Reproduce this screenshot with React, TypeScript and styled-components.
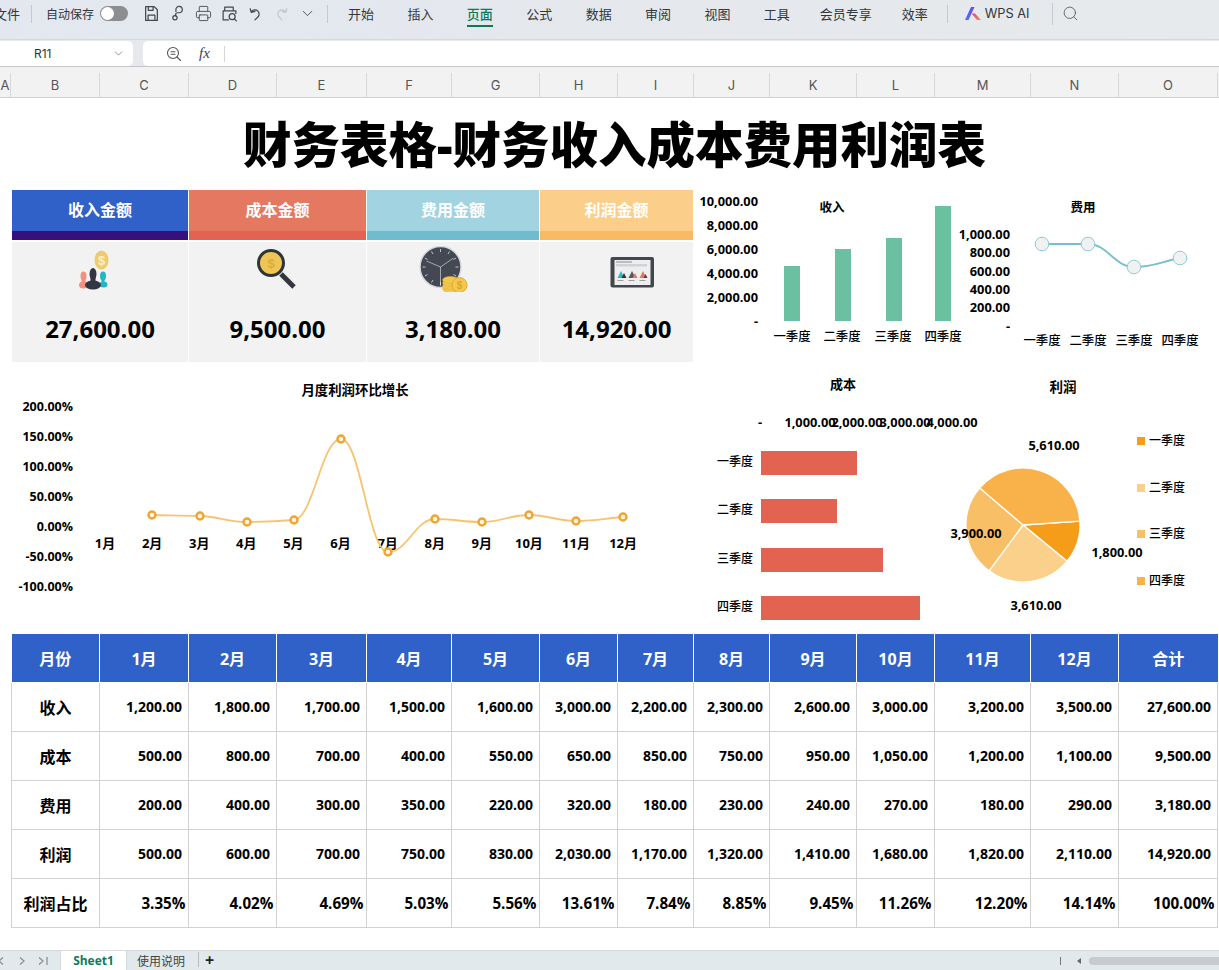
import React from "react";
import styled, { createGlobalStyle } from "styled-components";
import { ChevronDown, Printer, Search } from "lucide-react";

const FONT = `"Open Sans", "Noto Sans CJK SC", sans-serif`;
const UI = `Inter, "Noto Sans CJK SC", sans-serif`;

const Global = createGlobalStyle`
  html, body { margin: 0; padding: 0; background: #fff; }
  body { font-family: ${FONT}; }
  * { box-sizing: border-box; }
`;

const Page = styled.div`
  width: 1219px; height: 970px; overflow: hidden; display: flex; flex-direction: column; background: #fff;
`;

/* ---------- toolbar ---------- */
const Toolbar = styled.div`
  height: 40px; flex: none; display: flex; align-items: center; padding-bottom: 12px;
  background: linear-gradient(90deg, #e3e7ef, #e6eaec); border-bottom: 1px solid #d4d7db;
  font-family: ${UI}; font-size: 13px; color: #33363a; white-space: nowrap;
`;
const FileLabel = styled.span` margin-left: -6px; width: 26px; flex: none; `;
const Sep = styled.span<{ $left: number; $h?: number }>`
  width: 1px; height: ${(p) => p.$h ?? 18}px; background: #c6cad0; flex: none; margin-left: ${(p) => p.$left}px;
`;
const AutoSave = styled.span` margin-left: 14px; font-size: 12px; width: 48px; flex: none; `;
const Toggle = styled.span`
  margin-left: 6px; width: 28px; height: 15px; border-radius: 8px; background: #8b8d91; flex: none; display: flex; align-items: center; padding-left: 1px;
`;
const Knob = styled.span` width: 13px; height: 13px; border-radius: 50%; background: #fff; `;
const IconGroup = styled.div` display: flex; gap: 9px; margin-left: 15px; color: #44474c; `;
const Nav = styled.div` display: flex; gap: 33.4px; margin-left: 20px; `;
const NavItem = styled.span<{ $active?: boolean; $tight?: boolean }>`
  position: relative; color: ${(p) => (p.$active ? "#0b7a57" : "#33363a")}; font-weight: ${(p) => (p.$active ? 500 : 400)};
  margin-left: ${(p) => (p.$tight ? -3.5 : 0)}px;
  ${(p) => p.$active && `&::after { content: ""; position: absolute; left: 0; right: 0; bottom: -4px; height: 2px; background: #0b7a57; }`}
`;
const Logo = styled.svg` margin-left: 17px; flex: none; `;
const AiText = styled.span` margin-left: 4px; font-size: 12.8px; `;
const SearchWrap = styled.span` margin-left: 9px; display: flex; color: #555; `;

/* ---------- formula bar ---------- */
const FormulaRow = styled.div`
  height: 27px; flex: none; display: flex; gap: 10px; background: #e5e9ed; border-bottom: 1px solid #c4c6c9; padding-top: 1px;
`;
const NameBox = styled.div`
  width: 133px; height: 25px; background: #fff; border-radius: 0 5px 5px 0; display: flex; align-items: center;
  padding: 0 8px 0 34px; justify-content: space-between; font: 12px ${UI}; color: #333;
`;
const FormulaBox = styled.div`
  flex: 1; height: 25px; background: #fff; border-radius: 5px 0 0 5px; display: flex; align-items: center; padding-left: 23px;
`;
const Fx = styled.span`
  margin-left: 17px; width: 18px; font: italic 15px "Liberation Serif", serif; color: #444;
`;
const FxSep = styled.span` margin-left: 7px; width: 1px; height: 16px; background: #d4d6d9; `;

/* ---------- column headers ---------- */
const ColHead = styled.div`
  height: 31px; flex: none; display: flex; align-items: flex-end; background: #f2f2f2; border-bottom: 1px solid #d2d2d2; color: #555; font: 13px ${UI};
`;
const ColLetter = styled.div<{ $w: number }>`
  width: ${(p) => p.$w}px; height: 24px; flex: none; border-right: 1px solid #d8d8d8; display: flex; align-items: center; justify-content: center;
`;

/* ---------- sheet ---------- */
const Sheet = styled.div` flex: 1; display: flex; flex-direction: column; min-height: 0; `;
const Title = styled.h1`
  margin: 0; height: 92px; flex: none; display: flex; align-items: center; justify-content: center; padding: 0 0 4px 10px;
  font: 900 48.5px ${FONT}; color: #000;
`;
const TopRow = styled.div` display: flex; height: 172px; flex: none; `;
const KpiGrid = styled.div`
  margin-left: 12px; width: 681px; flex: none; display: grid; grid-template-columns: 177px 178px 173px 153px; 
`;
const Kpi = styled.div` display: flex; flex-direction: column; border-right: 1px solid #fff; &:last-child { border-right: 0; } `;
const KpiHead = styled.div<{ $bg: string; $band: string }>`
  height: 50px; flex: none; background: ${(p) => p.$bg}; border-bottom: 9px solid ${(p) => p.$band}; padding-bottom: 3px;
  color: #fff; font: 700 16px ${FONT}; display: flex; align-items: center; justify-content: center;
`;
const KpiBody = styled.div`
  margin-top: 2px; height: 120px; background: #f2f2f2; display: flex; flex-direction: column; align-items: center; padding-top: 4px;
`;
const KpiIcon = styled.svg<{ $shift: number }>` flex: none; transform: translateX(${(p) => p.$shift}px); `;
const KpiValue = styled.div` margin-top: 21px; font: 700 24px/32px ${FONT}; color: #000; `;

const Chart = styled.svg<{ $free?: boolean }>`
  display: block; flex: none; overflow: ${(p) => (p.$free ? "visible" : "hidden")};
`;
const ChartText = styled.text<{ $size?: number; $weight?: number }>`
  font-family: ${FONT}; font-size: ${(p) => p.$size ?? 12.8}px; font-weight: ${(p) => p.$weight ?? 700}; fill: #000;
`;
const MidRow = styled.div` display: flex; height: 259px; flex: none; margin-top: 13px; `;

/* ---------- table ---------- */
const Table = styled.table`
  margin-left: 11px; width: 1206px; flex: none; table-layout: fixed; border-collapse: collapse; font-family: ${FONT};
`;
const Th = styled.th`
  height: 48px; background: #3061c8; color: #fff; font-size: 16px; font-weight: 700; border: 1px solid #fff; border-top: 0; padding: 0;
  &:first-child { border-left: 0; } &:last-child { border-right: 0; }
`;
const RowHead = styled.td`
  height: 49px; border: 1px solid #d2d2d2; text-align: center; font-size: 16px; font-weight: 700; color: #000; padding: 0;
`;
const Cell = styled.td<{ $pct?: boolean }>`
  height: 49px; border: 1px solid #d2d2d2; text-align: right; color: #000; font-weight: 700;
  font-size: ${(p) => (p.$pct ? 15.2 : 14)}px; padding: 0 ${(p) => (p.$pct ? 2.5 : 6)}px 0 0; white-space: nowrap;
`;

/* ---------- tabs ---------- */
const TabBar = styled.div`
  margin-top: 22px; height: 21px; flex: none; display: flex; align-items: flex-end; background: #e2e9ec; border-top: 1px solid #d6dadc;
  font: 12px ${FONT}; color: #444;
`;
const Arrows = styled.div` width: 60px; flex: none; height: 100%; display: flex; align-items: center; color: #8b8f92; `;
const ActiveTab = styled.div`
  width: 67px; height: 100%; flex: none; background: #fff; border: 1px solid #d6dadc; border-top: 0; border-bottom: 0;
  display: flex; align-items: center; justify-content: center; color: #0f7a5a; font-weight: 700; font-size: 12px;
`;
const Tab = styled.div` margin-left: 10px; width: 50px; height: 100%; flex: none; display: flex; align-items: center; color: #444; `;
const TabSep = styled.span` margin: 0 0 2px 11px; width: 1px; height: 15px; background: #b8bcbf; flex: none; align-self: center; `;
const Plus = styled.span` margin-left: 6px; font: 700 16px/17px ${FONT}; color: #222; width: 12px; flex: none; align-self: center; `;
const ScrollArea = styled.div` margin-left: auto; height: 100%; display: flex; align-items: center; gap: 8px; `;
const Tick = styled.span` width: 1px; height: 8px; background: #777; margin-right: 8px; `;
const LeftTri = styled.span` width: 0; height: 0; border: 3px solid transparent; border-right: 4px solid #666; border-left: 0; `;
const Thumb = styled.span` width: 130px; height: 8px; border-radius: 4px 0 0 4px; background: #c7cbcd; `;

/* ---------- data ---------- */
const colWidths = [88, 89, 88, 90, 85, 88, 78, 76, 76, 87, 78, 96, 88, 99];
const letters = [["A", 11], ["B", 89], ["C", 89], ["D", 88], ["E", 90], ["F", 85], ["G", 88], ["H", 78], ["I", 76], ["J", 76], ["K", 87], ["L", 78], ["M", 96], ["N", 88], ["O", 99]] as [string, number][];
const months = ["1月", "2月", "3月", "4月", "5月", "6月", "7月", "8月", "9月", "10月", "11月", "12月"];
const rows: [string, string[]][] = [
  ["收入", ["1,200.00", "1,800.00", "1,700.00", "1,500.00", "1,600.00", "3,000.00", "2,200.00", "2,300.00", "2,600.00", "3,000.00", "3,200.00", "3,500.00", "27,600.00"]],
  ["成本", ["500.00", "800.00", "700.00", "400.00", "550.00", "650.00", "850.00", "750.00", "950.00", "1,050.00", "1,200.00", "1,100.00", "9,500.00"]],
  ["费用", ["200.00", "400.00", "300.00", "350.00", "220.00", "320.00", "180.00", "230.00", "240.00", "270.00", "180.00", "290.00", "3,180.00"]],
  ["利润", ["500.00", "600.00", "700.00", "750.00", "830.00", "2,030.00", "1,170.00", "1,320.00", "1,410.00", "1,680.00", "1,820.00", "2,110.00", "14,920.00"]],
  ["利润占比", ["3.35%", "4.02%", "4.69%", "5.03%", "5.56%", "13.61%", "7.84%", "8.85%", "9.45%", "11.26%", "12.20%", "14.14%", "100.00%"]],
];
const quarters = ["一季度", "二季度", "三季度", "四季度"];

/* monotone smooth path through points: flat tangent at each local peak, so no overshoot */
function smooth(pts: [number, number][]) {
  const slope = (i: number) => (pts[i + 1][1] - pts[i][1]) / (pts[i + 1][0] - pts[i][0]);
  const tan = pts.map((_, i) => {
    if (i === 0) return slope(0);
    if (i === pts.length - 1) return slope(i - 1);
    const a = slope(i - 1), b = slope(i);
    return a * b <= 0 ? 0 : (2 * a * b) / (a + b);
  });
  let d = `M${pts[0][0]} ${pts[0][1]}`;
  for (let i = 0; i < pts.length - 1; i++) {
    const [x1, y1] = pts[i], [x2, y2] = pts[i + 1];
    const h = (x2 - x1) / 2.4;
    d += `C${x1 + h} ${y1 + tan[i] * h} ${x2 - h} ${y2 - tan[i + 1] * h} ${x2} ${y2}`;
  }
  return d;
}

/* ---------- toolbar icons ---------- */
const Ic = ({ children, color = "currentColor" }: { children: React.ReactNode; color?: string }) => (
  <svg width="17" height="17" viewBox="0 0 16 16" fill="none" stroke={color} strokeWidth="1.150" strokeLinecap="round" strokeLinejoin="round">{children}</svg>
);

const ToolbarIcons = () => (
  <IconGroup>
    <Ic><path d="M2.500 1.500h8l3 3v10h-11zM5 1.500v3.500h4.500v-3.500M4.800 14.500V9.500h6.400v5" /></Ic>
    <Ic><path d="M6.500 6V4.300a3 3 0 1 1 3 3H8A1.800 1.800 0 0 0 6.200 9.100V10" /><circle cx="5.600" cy="12" r="2" /></Ic>
    <Printer size={17} strokeWidth={1.25} />
    <Ic><path d="M3.500 5V2h8v3M7 14H2V5.500h12V8" /><circle cx="10.500" cy="11" r="2.800" /><path d="M12.500 13l2 2" /></Ic>
    <Ic><path d="M3 3.500 4 7l3.500-1M4 6.500A4 4 0 1 1 9.500 12L7.500 14" /></Ic>
    <Ic color="#c3c7cb"><path d="M13 3.500 12 7 8.500 6M12 6.500A4 4 0 1 0 6.500 12L8.500 14" /></Ic>
    <ChevronDown size={17} strokeWidth={1.25} />
  </IconGroup>
);

/* ---------- KPI pictures ---------- */
const Dollar = ({ x, y, size, fill }: { x: number; y: number; size: number; fill: string }) => (
  <text x={x} y={y} fontSize={size} fontFamily="Liberation Sans" fontWeight="700" textAnchor="middle" fill={fill}>$</text>
);
const MoneyIcon = () => (
  <KpiIcon $shift={-5.5} width="50" height="46" viewBox="70 246 50 46">
    <ellipse cx="102" cy="260" rx="7" ry="9.500" fill="#eecb6f" />
    <Dollar x={102} y={265} size={13} fill="#fbf0cf" />
    <ellipse cx="84" cy="276" rx="3" ry="4.500" fill="#f58f80" /><ellipse cx="84" cy="285" rx="4.500" ry="3.500" fill="#f58f80" />
    <rect x="82" y="278" width="4" height="6" fill="#f58f80" />
    <ellipse cx="103.500" cy="276" rx="3" ry="4.500" fill="#22b7c6" /><ellipse cx="104" cy="284.500" rx="4" ry="3" fill="#22b7c6" />
    <rect x="102" y="278" width="3" height="6" fill="#22b7c6" />
    <ellipse cx="93.500" cy="274" rx="3.500" ry="6" fill="#333642" /><ellipse cx="93.500" cy="285" rx="8" ry="4.500" fill="#333642" />
    <rect x="91" y="277" width="5" height="7" fill="#333642" />
  </KpiIcon>
);
const LensIcon = () => (
  <KpiIcon $shift={-2} width="50" height="46" viewBox="251 246 50 46">
    <line x1="281" y1="274" x2="294" y2="287" stroke="#33363c" strokeWidth="5" />
    <circle cx="271" cy="263" r="12.500" fill="#eec655" stroke="#2f333a" strokeWidth="3" />
    <Dollar x={271} y={268} size={13} fill="#d9ad3c" />
  </KpiIcon>
);
const ClockIcon = () => {
  const ticks = Array.from({ length: 12 }, (_, i) => (i * Math.PI) / 6);
  return (
    <KpiIcon $shift={-8.5} width="50" height="46" viewBox="420 246 50 46">
      <circle cx="441" cy="267" r="20.500" fill="#444853" stroke="#d5d8dd" strokeWidth="1.500" />
      {ticks.map((a, i) => (
        <line key={i} x1={441 + 18 * Math.sin(a)} y1={267 - 18 * Math.cos(a)} x2={441 + 15 * Math.sin(a)} y2={267 - 15 * Math.cos(a)} stroke="#dfe1e5" strokeWidth=".8" />
      ))}
      <path d="M441 267 427 261M441 267 454 258M441 267v19" stroke="#e8e9ec" strokeWidth=".6" fill="none" />
      {[289, 286, 283, 280].map((y) => <ellipse key={y} cx="451" cy={y} rx="8" ry="3.500" fill="#f3c64c" stroke="#e0ac2e" strokeWidth=".5" />)}
      <circle cx="460" cy="285" r="7.500" fill="#f4c84f" stroke="#e0ac2e" strokeWidth="1" />
      <Dollar x={460} y={289} size={10} fill="#dca730" />
    </KpiIcon>
  );
};
const TabletIcon = () => (
  <KpiIcon $shift={15.5} width="50" height="46" viewBox="607 246 50 46">
    <rect x="610" y="257" width="43.500" height="30.500" rx="2" fill="#42464e" />
    <rect x="614" y="260" width="36" height="25" fill="#eeeeee" />
    <rect x="615.500" y="261" width="16" height="2" fill="#b8bcc2" /><rect x="615.500" y="264" width="31" height="2.500" fill="#cfd2d6" />
    <path d="M617 278l3.500-7 3.500 7z" fill="#30b6c8" /><path d="M621 278l2.500-5 2.500 5z" fill="#333" />
    <path d="M628 278l3.500-7 3.500 7z" fill="#555a63" /><path d="M632 278l2.500-5 2.500 5z" fill="#e07a6c" />
    <path d="M639 278l3.500-7 3.500 7z" fill="#e8755f" /><path d="M643 278l2-4 2 4z" fill="#444" />
    <rect x="617" y="280" width="6" height="1" fill="#9a9da2" /><rect x="628" y="280" width="6" height="1" fill="#9a9da2" /><rect x="639" y="280" width="6" height="1" fill="#9a9da2" />
  </KpiIcon>
);

const kpis = [
  { label: "收入金额", bg: "#3061c8", band: "#36107f", value: "27,600.00", Icon: MoneyIcon },
  { label: "成本金额", bg: "#e57861", band: "#e26352", value: "9,500.00", Icon: LensIcon },
  { label: "费用金额", bg: "#a1d4e0", band: "#6fbccf", value: "3,180.00", Icon: ClockIcon },
  { label: "利润金额", bg: "#fbcf89", band: "#f8bb62", value: "14,920.00", Icon: TabletIcon },
];

/* ---------- charts ---------- */
const RevenueChart = () => {
  const bars = [[784, 266], [835, 249], [886, 238], [935, 206]];
  const ys = [["10,000.00", 206], ["8,000.00", 230], ["6,000.00", 254], ["4,000.00", 278], ["2,000.00", 302], ["-", 326]] as [string, number][];
  return (
    <Chart $free width="269" height="172" viewBox="693 190 269 172">
      <ChartText x="832" y="212" textAnchor="middle" $size={12.5}>收入</ChartText>
      {ys.map(([t, y]) => <ChartText key={t} x="758" y={y} textAnchor="end">{t}</ChartText>)}
      {bars.map(([x, y]) => <rect key={x} x={x} y={y} width="16" height={321 - y} fill="#6cc0a2" />)}
      {quarters.map((q, i) => <ChartText key={q} x={[792, 842, 893, 943][i]} y="341" textAnchor="middle" $size={12.4} $weight={500}>{q}</ChartText>)}
    </Chart>
  );
};

const ExpenseChart = () => {
  const pts: [number, number][] = [[1042, 244], [1088, 244], [1134, 267], [1180, 258]];
  const ys = [["1,000.00", 239], ["800.00", 257], ["600.00", 276], ["400.00", 294], ["200.00", 312], ["-", 331]] as [string, number][];
  return (
    <Chart $free width="257" height="172" viewBox="962 190 257 172">
      <ChartText x="1083" y="212" textAnchor="middle" $size={12.5}>费用</ChartText>
      {ys.map(([t, y]) => <ChartText key={t} x="1010" y={y} textAnchor="end">{t}</ChartText>)}
      <path d={smooth(pts)} fill="none" stroke="#76bfd0" strokeWidth="1.800" />
      {pts.map(([x, y]) => <circle key={x} cx={x} cy={y} r="6.800" fill="#f0f2f2" stroke="#8fcad8" strokeWidth="1" />)}
      {quarters.map((q, i) => <ChartText key={q} x={[1042, 1088, 1134, 1180][i]} y="345" textAnchor="middle" $size={12.4} $weight={500}>{q}</ChartText>)}
    </Chart>
  );
};

const GrowthChart = () => {
  const xs = [152, 200, 247, 294, 341, 388, 435, 482, 529, 576, 623];
  const vals = [515, 516, 522, 520, 439, 552, 519, 522, 515, 521, 517];
  const pts = xs.map((x, i) => [x, vals[i]] as [number, number]);
  const ys = ["200.00%", "150.00%", "100.00%", "50.00%", "0.00%", "-50.00%", "-100.00%"];
  return (
    <Chart width="693" height="259" viewBox="0 375 693 259">
      <ChartText x="355" y="394.500" textAnchor="middle" $size={13.4} $weight={600}>月度利润环比增长</ChartText>
      {ys.map((t, i) => <ChartText key={t} x="73" y={411 + 30 * i} textAnchor="end" $size={12.5}>{t}</ChartText>)}
      {months.map((m, i) => <ChartText key={m} x={105 + i * 47.100} y="548" textAnchor="middle" $size={13}>{m}</ChartText>)}
      <path d={smooth(pts)} fill="none" stroke="#f8c36f" strokeWidth="1.800" />
      {pts.map(([x, y]) => <circle key={x} cx={x} cy={y} r="3.500" fill="#fdf6ea" stroke="#f0a52e" strokeWidth="2.400" />)}
    </Chart>
  );
};

const CostChart = () => {
  const bars = [[451, 857], [499, 837], [548, 883], [596, 920]];
  const axis = [["-", 760], ["1,000.00", 810], ["2,000.00", 857], ["3,000.00", 905], ["4,000.00", 952]] as [string, number][];
  return (
    <Chart $free width="247" height="259" viewBox="693 375 247 259">
      <ChartText x="843" y="389" textAnchor="middle" $size={13}>成本</ChartText>
      {axis.map(([t, x]) => <ChartText key={t} x={x} y="426.500" textAnchor="middle">{t}</ChartText>)}
      {bars.map(([y, x2]) => <rect key={y} x="761" y={y} width={x2 - 761} height="24" fill="#e26352" />)}
      {quarters.map((q, i) => <ChartText key={q} x="753" y={[466, 514, 563, 611][i]} textAnchor="end" $size={12} $weight={500}>{q}</ChartText>)}
    </Chart>
  );
};

const ProfitPie = () => {
  const cx = 1023, cy = 525, r = 57;
  const data = [[1800, "#f59d18"], [3610, "#fbd08a"], [3900, "#f9bf66"], [5610, "#f8b249"]] as [number, string][];
  const total = 14920;
  let a = 86 * Math.PI / 180;
  const slices = data.map(([v, c]) => {
    const b = a + (v / total) * Math.PI * 2;
    const large = b - a > Math.PI ? 1 : 0;
    const d = `M${cx} ${cy}L${cx + r * Math.sin(a)} ${cy - r * Math.cos(a)}A${r} ${r} 0 ${large} 1 ${cx + r * Math.sin(b)} ${cy - r * Math.cos(b)}Z`;
    a = b;
    return <path key={c} d={d} fill={c} stroke="#fff" strokeWidth="1.300" />;
  });
  const labels = [["5,610.00", 1054, 450], ["3,900.00", 976, 538], ["1,800.00", 1117, 557], ["3,610.00", 1036, 610]] as [string, number, number][];
  return (
    <Chart width="279" height="259" viewBox="940 375 279 259">
      <ChartText x="1063" y="392" textAnchor="middle" $size={13.5}>利润</ChartText>
      {slices}
      {labels.map(([t, x, y]) => <ChartText key={t} x={x} y={y} textAnchor="middle">{t}</ChartText>)}
      {quarters.map((q, i) => {
        const y = [441, 488, 534, 581][i];
        return (
          <g key={q}>
            <rect x="1137" y={y - 4} width="8" height="8" fill={data[i][1]} />
            <ChartText x="1149" y={y + 4} $size={12} $weight={500}>{q}</ChartText>
          </g>
        );
      })}
    </Chart>
  );
};

export default function App() {
  return (
    <Page>
      <Global />
      <Toolbar>
        <FileLabel>文件</FileLabel>
        <Sep $left={11} />
        <AutoSave>自动保存</AutoSave>
        <Toggle><Knob /></Toggle>
        <ToolbarIcons />
        <Sep $left={11} />
        <Nav>
          <NavItem>开始</NavItem>
          <NavItem>插入</NavItem>
          <NavItem $active>页面</NavItem>
          <NavItem>公式</NavItem>
          <NavItem>数据</NavItem>
          <NavItem>审阅</NavItem>
          <NavItem>视图</NavItem>
          <NavItem>工具</NavItem>
          <NavItem $tight>会员专享</NavItem>
          <NavItem $tight>效率</NavItem>
        </Nav>
        <Sep $left={19} />
        <Logo width="16" height="13" viewBox="0 0 16 13">
          <defs>
            <linearGradient id="wpsA" x1="0" y1="1" x2="1" y2="0"><stop offset="0" stopColor="#3f7cf5" /><stop offset="1" stopColor="#7b3ff2" /></linearGradient>
            <linearGradient id="wpsB" x1="0" y1="0" x2="1" y2="1"><stop offset="0" stopColor="#e0409a" /><stop offset="1" stopColor="#f7913d" /></linearGradient>
          </defs>
          <path d="M0 13 6 0h3.500L3.500 13z" fill="url(#wpsA)" />
          <path d="M6.500 6.500h3.500L16 13h-4z" fill="url(#wpsB)" />
        </Logo>
        <AiText>WPS AI</AiText>
        <Sep $left={22} $h={22} />
        <SearchWrap><Search size={17} strokeWidth={1.2} /></SearchWrap>
      </Toolbar>

      <FormulaRow>
        <NameBox>R11<ChevronDown size={13} strokeWidth={1.3} color="#666" /></NameBox>
        <FormulaBox>
          <svg width="16" height="16" viewBox="0 0 16 16" fill="none" stroke="#555" strokeWidth="1.100" strokeLinecap="round">
            <circle cx="7" cy="7" r="5.500" /><path d="M5 5.800h4M5 8.200h4M11 11l3.500 3.500" />
          </svg>
          <Fx>fx</Fx>
          <FxSep />
        </FormulaBox>
      </FormulaRow>

      <ColHead>
        {letters.map(([l, w]) => <ColLetter key={l} $w={w}>{l}</ColLetter>)}
      </ColHead>

      <Sheet>
        <Title>财务表格-财务收入成本费用利润表</Title>
        <TopRow>
          <KpiGrid>
            {kpis.map(({ label, bg, band, value, Icon }) => (
              <Kpi key={label}>
                <KpiHead $bg={bg} $band={band}>{label}</KpiHead>
                <KpiBody>
                  <Icon />
                  <KpiValue>{value}</KpiValue>
                </KpiBody>
              </Kpi>
            ))}
          </KpiGrid>
          <RevenueChart />
          <ExpenseChart />
        </TopRow>
        <MidRow>
          <GrowthChart />
          <CostChart />
          <ProfitPie />
        </MidRow>
        <Table>
          <colgroup>{colWidths.map((w, i) => <col key={i} width={w} />)}</colgroup>
          <thead>
            <tr>
              <Th>月份</Th>
              {months.map((m) => <Th key={m}>{m}</Th>)}
              <Th>合计</Th>
            </tr>
          </thead>
          <tbody>
            {rows.map(([name, vals]) => (
              <tr key={name}>
                <RowHead>{name}</RowHead>
                {vals.map((v, i) => <Cell key={i} $pct={v.endsWith("%")}>{v}</Cell>)}
              </tr>
            ))}
          </tbody>
        </Table>
        <TabBar>
          <Arrows>
            <svg width="60" height="14" viewBox="0 0 60 14" fill="none" stroke="#8b8f92" strokeWidth="1.300">
              <path d="M3 3.500-1 7l4 3.500M20 3.500 24 7l-4 3.500M39 3.500 43 7l-4 3.500M47 3v8" />
            </svg>
          </Arrows>
          <ActiveTab>Sheet1</ActiveTab>
          <Tab>使用说明</Tab>
          <TabSep />
          <Plus>+</Plus>
          <ScrollArea>
            <Tick />
            <LeftTri />
            <Thumb />
          </ScrollArea>
        </TabBar>
      </Sheet>
    </Page>
  );
}
